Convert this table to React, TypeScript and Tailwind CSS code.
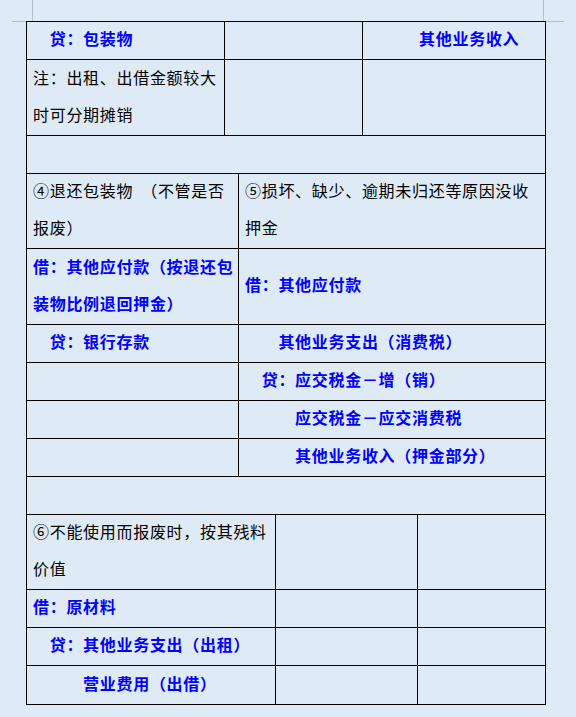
import React from 'react';

const font = { fontFamily: '"Noto Sans CJK SC", "Noto Sans", sans-serif' };

type Cell = {
  lines?: string[];
  blue?: boolean;
  w?: string;
};

function TextCell({ lines = [], blue, w }: Cell) {
  return (
    <div
      className={`${w ?? 'flex-1'} ${w ? 'border-r border-black' : ''} flex flex-col justify-center px-[6px] pb-[4px] whitespace-pre text-[16px] tracking-[0.7px] ${
        blue ? 'font-bold text-[#0000ff]' : 'text-black'
      }`}
    >
      {lines.map((l, i) => (
        <div key={i} className="leading-[37px]">
          {l}
        </div>
      ))}
    </div>
  );
}

function Row({ h, last, children }: { h: string; last?: boolean; children?: React.ReactNode }) {
  return <div className={`flex ${h} ${last ? '' : 'border-b border-black'}`}>{children}</div>;
}

export default function App() {
  return (
    <div className="w-[576px] h-[717px] overflow-hidden bg-[#deeaf6]" style={font}>
      {/* page corner marks */}
      <div className="ml-[12px] w-[552px] h-[22px] border-b border-[#b4bdc9] flex justify-between">
        <div className="w-[21px] h-full border-r border-[#b4bdc9]" />
        <div className="w-[21px] h-full border-l border-[#b4bdc9]" />
      </div>

      <div className="-mt-px ml-[26px] w-[520px] border border-black">
        <Row h="h-[38px]">
          <TextCell w="w-[198px]" blue lines={['　贷：包装物']} />
          <TextCell w="w-[138px]" />
          <TextCell blue lines={['　　　其他业务收入']} />
        </Row>
        <Row h="h-[76px]">
          <TextCell w="w-[198px]" lines={['注：出租、出借金额较大', '时可分期摊销']} />
          <TextCell w="w-[138px]" />
          <TextCell />
        </Row>
        <Row h="h-[38px]" />
        <Row h="h-[75px]">
          <div className="w-[212px] border-r border-black flex flex-col justify-center px-[6px] pb-[4px] whitespace-pre text-[16px] tracking-[0.7px] text-black">
            <div className="leading-[37px]">
              ④退还包装物<span className="inline-block w-[8px]" />（不管是否
            </div>
            <div className="leading-[37px]">报废）</div>
          </div>
          <TextCell lines={['⑤损坏、缺少、逾期未归还等原因没收', '押金']} />
        </Row>
        <Row h="h-[76px]">
          <TextCell w="w-[212px]" blue lines={['借：其他应付款（按退还包', '装物比例退回押金）']} />
          <TextCell blue lines={['借：其他应付款']} />
        </Row>
        <Row h="h-[38px]">
          <TextCell w="w-[212px]" blue lines={['　贷：银行存款']} />
          <TextCell blue lines={['　　其他业务支出（消费税）']} />
        </Row>
        <Row h="h-[38px]">
          <TextCell w="w-[212px]" />
          <TextCell blue lines={['　贷：应交税金－增（销）']} />
        </Row>
        <Row h="h-[38px]">
          <TextCell w="w-[212px]" />
          <TextCell blue lines={['　　　应交税金－应交消费税']} />
        </Row>
        <Row h="h-[38px]">
          <TextCell w="w-[212px]" />
          <TextCell blue lines={['　　　其他业务收入（押金部分）']} />
        </Row>
        <Row h="h-[38px]" />
        <Row h="h-[75px]">
          <TextCell w="w-[249px]" lines={['⑥不能使用而报废时，按其残料', '价值']} />
          <TextCell w="w-[142px]" />
          <TextCell />
        </Row>
        <Row h="h-[38px]">
          <TextCell w="w-[249px]" blue lines={['借：原材料']} />
          <TextCell w="w-[142px]" />
          <TextCell />
        </Row>
        <Row h="h-[38px]">
          <TextCell w="w-[249px]" blue lines={['　贷：其他业务支出（出租）']} />
          <TextCell w="w-[142px]" />
          <TextCell />
        </Row>
        <Row h="h-[38px]" last>
          <TextCell w="w-[249px]" blue lines={['　　　营业费用（出借）']} />
          <TextCell w="w-[142px]" />
          <TextCell />
        </Row>
      </div>
    </div>
  );
}
